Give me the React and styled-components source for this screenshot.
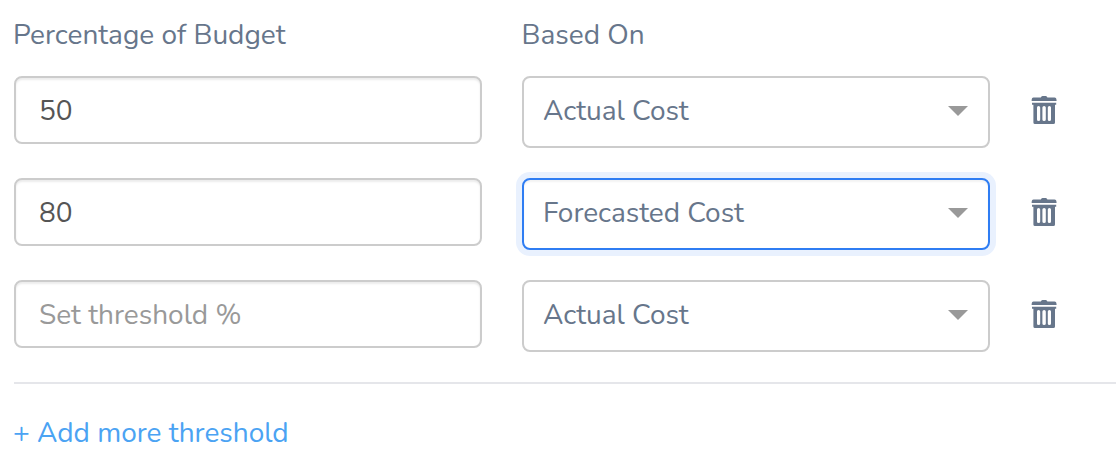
import React, { useState } from "react";
import styled, { createGlobalStyle } from "styled-components";

const GlobalStyle = createGlobalStyle`
  *, *::before, *::after { box-sizing: border-box; }
  body {
    margin: 0;
    background: #fff;
    color: #67768b;
    font-family: Nunito, Lato, "Open Sans", sans-serif;
    font-size: 28px;
    font-weight: 400;
    line-height: 36px;
  }
  button, input, select { font: inherit; }
`;

const Form = styled.form`
  padding: 17px 0 16px 13px;
`;

const Grid = styled.div`
  display: grid;
  grid-template-columns: minmax(0, 1fr) minmax(0, 1fr) 86px;
  column-gap: 40px;
`;

const Headings = styled(Grid)`
  margin-bottom: 23px;
`;

const Rows = styled.div`
  display: flex;
  flex-direction: column;
  gap: 30px;
  margin-left: 1px;
  padding-bottom: 30px;
  border-bottom: 2px solid #e5e6ea;
`;

const Row = styled(Grid)`
  align-items: start;
`;

const ThresholdInput = styled.input`
  width: 100%;
  height: 68px;
  padding: 2px 23px 0;
  border: 2px solid #ccc;
  border-radius: 8px;
  background: #fff;
  box-shadow: inset 0 2px 2px rgba(0, 0, 0, 0.08);
  color: #555;
  outline: none;

  &::placeholder {
    color: #999;
    opacity: 1;
  }
`;

const SelectBox = styled.div`
  position: relative;
`;

const Select = styled.select`
  display: block;
  appearance: none;
  width: 100%;
  height: 72px;
  padding: 0 60px 2px 19px;
  border: 2px solid ${({ $active }) => ($active ? "#2f7df3" : "#ccc")};
  border-radius: 8px;
  background: #fff;
  box-shadow: ${({ $active }) => ($active ? "0 0 0 6px #e9f1fe, inset 0 2px 2px rgba(0, 0, 0, 0.05)" : "none")};
  color: inherit;
  outline: none;
`;

const Caret = styled.span`
  position: absolute;
  top: 30px;
  right: 22px;
  border: 10px solid transparent;
  border-top-color: #999;
  border-bottom-width: 0;
  pointer-events: none;
`;

const DeleteButton = styled.button`
  display: flex;
  align-items: center;
  justify-content: center;
  width: 28px;
  height: 68px;
  padding: 0;
  border: 0;
  background: none;
  color: inherit;
  cursor: pointer;
`;

const AddLink = styled.a`
  display: inline-block;
  margin-top: 31px;
  color: #4ba3f3;
  text-decoration: none;
`;

function TrashIcon() {
  return (
    <svg width="28" height="28" viewBox="0 0 28 28" fill="currentColor" aria-hidden="true">
      <path d="M3.5 1.6H10.8Q11.2 0 12.5 0H15.8Q17 0 17.4 1.6H24.5Q26.6 1.6 26.6 5H1.6Q1.6 1.6 3.5 1.6Z" />
      <path
        fillRule="evenodd"
        d="M2 6.8H26.2V8.8H25V26.4Q25 28 23.4 28H5Q3.4 28 3.4 26.4V8.8H2ZM8.5 10Q7 10 7 11.5V23.5Q7 25 8.5 25Q10.2 25 10.2 23.5V11.5Q10.2 10 8.5 10ZM14.1 10Q12.4 10 12.4 11.5V23.5Q12.4 25 14.1 25Q15.8 25 15.8 23.5V11.5Q15.8 10 14.1 10ZM19.4 10Q17.8 10 17.8 11.5V23.5Q17.8 25 19.4 25Q21 25 21 23.5V11.5Q21 10 19.4 10Z"
      />
    </svg>
  );
}

const initialRows = [
  { id: 1, percent: "50", basis: "Actual Cost" },
  { id: 2, percent: "80", basis: "Forecasted Cost" },
  { id: 3, percent: "", basis: "Actual Cost" },
];

export default function App() {
  const [rows, setRows] = useState(initialRows);
  const [activeId, setActiveId] = useState(2);

  const update = (id, change) =>
    setRows((list) => list.map((row) => (row.id === id ? { ...row, ...change } : row)));

  const addRow = (event) => {
    event.preventDefault();
    setRows((list) => [...list, { id: Date.now(), percent: "", basis: "Actual Cost" }]);
  };

  return (
    <>
      <GlobalStyle />
      <Form onSubmit={(event) => event.preventDefault()}>
        <Headings>
          <label id="percent-heading" htmlFor="percent-1">Percentage of Budget</label>
          <label id="basis-heading" htmlFor="basis-1">Based On</label>
        </Headings>
        <Rows>
          {rows.map((row) => (
            <Row key={row.id}>
              <ThresholdInput
                id={`percent-${row.id}`}
                aria-labelledby="percent-heading"
                placeholder="Set threshold %"
                value={row.percent}
                onChange={(event) => update(row.id, { percent: event.target.value })}
              />
              <SelectBox>
                <Select
                  id={`basis-${row.id}`}
                  aria-labelledby="basis-heading"
                  $active={row.id === activeId}
                  value={row.basis}
                  onFocus={() => setActiveId(row.id)}
                  onChange={(event) => update(row.id, { basis: event.target.value })}
                >
                  <option>Actual Cost</option>
                  <option>Forecasted Cost</option>
                </Select>
                <Caret />
              </SelectBox>
              <DeleteButton
                type="button"
                aria-label="Delete threshold"
                onClick={() => setRows((list) => list.filter((item) => item.id !== row.id))}
              >
                <TrashIcon />
              </DeleteButton>
            </Row>
          ))}
        </Rows>
        <AddLink href="#add" onClick={addRow}>+ Add more threshold</AddLink>
      </Form>
    </>
  );
}
